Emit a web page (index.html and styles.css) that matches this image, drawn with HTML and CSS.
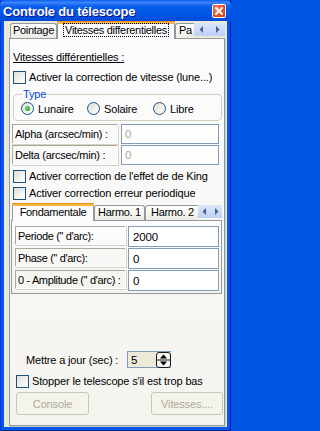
FILE: index.html
```html
<!DOCTYPE html>
<html lang="fr">
<head>
<meta charset="utf-8">
<title>Controle du télescope</title>
<link rel="stylesheet" href="styles.css">
</head>
<body>
<div class="window">
  <div class="titlebar">
    <span class="title">Controle du télescope</span>
    <span class="close"><svg width="8" height="8" viewBox="0 0 8 8"><path d="M1 1L7 7M7 1L1 7" stroke="#fff" stroke-width="1.8" stroke-linecap="square"/></svg></span>
  </div>
  <div class="client">
    <div class="tabctl outer">
      <div class="tabstrip">
        <div class="tabs">
          <div class="tab t-pointage">Pointage</div>
          <div class="tab active t-vitesses"><span class="focus">Vitesses differentielles</span></div>
          <div class="tab t-pa">Pa</div>
        </div>
        <div class="scroller">
          <span class="sbtn"><svg width="5" height="7" viewBox="0 0 5 7"><path d="M4 0L0.5 3.5L4 7Z" fill="#4D6185"/></svg></span>
          <span class="sbtn"><svg width="5" height="7" viewBox="0 0 5 7"><path d="M1 0L4.5 3.5L1 7Z" fill="#4D6185"/></svg></span>
        </div>
      </div>
      <div class="panel main">
        <div class="heading">Vitesses différentielles :</div>
        <label class="check first-check"><span class="box"></span>Activer la correction de vitesse (lune...)</label>
        <fieldset class="group">
          <legend>Type</legend>
          <div class="radios">
            <label class="radio r1"><span class="dot on"></span>Lunaire</label>
            <label class="radio r2"><span class="dot"></span>Solaire</label>
            <label class="radio r3"><span class="dot"></span>Libre</label>
          </div>
        </fieldset>
        <div class="field f-alpha"><span class="lbl">Alpha (arcsec/min) :</span><span class="input disabled">0</span></div>
        <div class="field f-delta"><span class="lbl">Delta (arcsec/min) :</span><span class="input disabled">0</span></div>
        <label class="check row17 king"><span class="box"></span>Activer correction de l'effet de de King</label>
        <label class="check row17"><span class="box"></span>Activer correction erreur periodique</label>

        <div class="tabctl inner">
          <div class="tabstrip">
            <div class="tabs">
              <div class="tab active t-fond">Fondamentale</div>
              <div class="tab t-h1">Harmo. 1</div>
              <div class="tab t-h2">Harmo. 2</div>
            </div>
            <div class="scroller small">
              <span class="sbtn"><svg width="5" height="7" viewBox="0 0 5 7"><path d="M4 0L0.5 3.5L4 7Z" fill="#4D6185"/></svg></span>
              <span class="sbtn"><svg width="5" height="7" viewBox="0 0 5 7"><path d="M1 0L4.5 3.5L1 7Z" fill="#4D6185"/></svg></span>
            </div>
          </div>
          <div class="panel sub">
            <div class="field2"><span class="lbl">Periode ('' d'arc):</span><span class="input">2000</span></div>
            <div class="field2"><span class="lbl">Phase ('' d'arc):</span><span class="input">0</span></div>
            <div class="field2"><span class="lbl">0 - Amplitude ('' d'arc) :</span><span class="input">0</span></div>
          </div>
        </div>

        <div class="spacer"></div>

        <div class="update">
          <span class="update-lbl">Mettre a jour (sec) :</span>
          <span class="spin-input">5</span>
          <span class="spin"><svg width="15" height="16" viewBox="0 0 15 16"><rect x="0.5" y="0.5" width="14" height="15" rx="2.5" fill="#F4F4F0" stroke="#1A1A1A"/><line x1="1" y1="8" x2="14" y2="8" stroke="#1A1A1A"/><path d="M7.5 2.5L11 6.5H4Z" fill="#000"/><path d="M4 9.5H11L7.5 13.5Z" fill="#000"/></svg></span>
        </div>
        <label class="check stop"><span class="box"></span>Stopper le telescope s'il est trop bas</label>
        <div class="buttons">
          <span class="btn b-console">Console</span>
          <span class="btn b-vit">Vitesses....</span>
        </div>
      </div>
    </div>
  </div>
</div>
</body>
</html>
```

FILE: styles.css
```css
* { box-sizing: border-box; }
html, body { margin: 0; padding: 0; }
body {
  width: 231px;
  height: 431px;
  overflow: hidden;
  font-family: "Liberation Sans", Arial, sans-serif;
  font-size: 11px;
  letter-spacing: -0.15px;
  color: #000;
  background: #0054E3;
}
.window {
  width: 231px;
  height: 431px;
  display: flex;
  flex-direction: column;
  background: #0058EE;
  padding: 0 4px 4px 4px;
  box-shadow: inset 1px 0 #0831D9, inset -1px 0 #001EA0, inset 0 -1px #001EA0;
}
.titlebar {
  height: 21px;
  margin: 0 -4px;
  padding: 0 5px 0 3px;
  display: flex;
  align-items: center;
  justify-content: space-between;
  background: linear-gradient(#0A5FEF 0%, #3B84F8 12%, #0A5EEE 30%, #0055E5 70%, #0049D9 100%);
  border-radius: 5px 5px 0 0;
}
.title {
  font-family: "Liberation Sans", Arial, sans-serif;
  font-weight: bold;
  font-size: 13px;
  letter-spacing: -0.2px;
  color: #fff;
  text-shadow: 1px 1px #0F1089;
  padding-top: 1px;
}
.close {
  width: 14px;
  height: 14px;
  border: 1px solid #fff;
  border-radius: 2px;
  background: radial-gradient(circle at 35% 35%, #F08A6C, #E0502A 60%, #C33A17);
  display: flex;
  align-items: center;
  justify-content: center;
  margin-top: 1px;
}
.client {
  flex: 1;
  background: #ECE9D8;
  padding: 0 2px 1px 5px;
  display: flex;
  flex-direction: column;
}
.tabctl { display: flex; flex-direction: column; }
.tabctl.outer { flex: 1; }
.tabstrip {
  height: 17px;
  display: flex;
  align-items: flex-end;
}
.tabs {
  flex: 1;
  display: flex;
  align-items: flex-end;
  overflow: hidden;
  height: 18px;
  margin-bottom: -1px;
  position: relative;
  z-index: 1;
}
.tab {
  flex: none;
  height: 15px;
  margin-bottom: 1px;
  border: 1px solid #919B9C;
  border-bottom: none;
  border-radius: 3px 3px 0 0;
  background: linear-gradient(#FFFFFF, #F3F3EF 60%, #ECEBE6);
  line-height: 13px;
  padding: 0;
  text-align: center;
  letter-spacing: -0.3px;
  white-space: nowrap;
  overflow: hidden;
}
.tab.active {
  height: 18px;
  margin-bottom: 0;
  background: #FCFCFE;
  border-top: 3px solid #F7B83A;
  line-height: 13px;
  overflow: visible;
}
.tab.active::before {
  content: "";
  display: block;
  height: 1px;
  margin: -3px -1px 2px -1px;
  background: #E68B2C;
  border-radius: 3px 3px 0 0;
}
.t-pointage { width: 47px; margin-left: 1px; }
.t-vitesses { width: 118px; }
.focus { outline: 1px dotted #000; outline-offset: 0; padding: 0 1px; }
.t-pa { width: 30px; text-align: left; padding-left: 3px; }
.scroller {
  width: 31px;
  height: 13px;
  margin-bottom: 1px;
  align-self: flex-end;
  display: flex;
  position: relative;
  top: -1px;
}
.sbtn {
  flex: 1;
  display: flex;
  align-items: center;
  justify-content: center;
  background: linear-gradient(#DCE6FB, #BCCFF6);
}
.panel {
  border: 1px solid #919B9C;
  background: linear-gradient(#FCFCFE, #F4F3EE);
}
.panel.main {
  flex: 1;
  display: flex;
  flex-direction: column;
  padding: 0 0 10px 3px;
  box-shadow: 1px 1px 0 #D0CEBF;
}
.heading {
  margin-top: 12px;
  line-height: 13px;
  text-decoration: underline;
}
.check {
  display: flex;
  align-items: center;
  height: 13px;
  line-height: 13px;
  white-space: nowrap;
}
.box {
  flex: none;
  width: 13px;
  height: 13px;
  border: 1px solid #1C5180;
  background: linear-gradient(135deg, #DCDCD7 0%, #F5F5F2 65%, #FFFFFF 100%);
  margin-right: 3px;
}
.first-check { margin-top: 7px; }
.group {
  margin: 4px 2px 0 0;
  padding: 1px 0 5px 7px;
  border: 1px solid #D0D0BF;
  border-radius: 4px;
  min-width: 0;
}
.group legend {
  color: #0046D5;
  padding: 0 1px;
  margin-left: 1px;
  line-height: 13px;
}
.radios { display: flex; height: 13px; }
.radio {
  display: flex;
  align-items: center;
  height: 13px;
  width: 66px;
}
.dot {
  flex: none;
  width: 13px;
  height: 13px;
  border-radius: 50%;
  border: 1px solid #1C5180;
  background: linear-gradient(135deg, #DCDCD7 0%, #F5F5F2 65%, #FFFFFF 100%);
  margin-right: 4px;
  display: flex;
  align-items: center;
  justify-content: center;
}
.dot.on::after {
  content: "";
  width: 5px;
  height: 5px;
  border-radius: 50%;
  background: radial-gradient(circle at 40% 40%, #7BE07B, #21A121 70%);
}
.field {
  display: flex;
  height: 20px;
  margin-left: -1px;
  margin-right: 5px;
}
.f-alpha { margin-top: 3px; }
.f-delta { margin-top: 1px; }
.lbl {
  flex: none;
  border: 1px solid;
  border-color: #ACA899 #FFFFFF #FFFFFF #ACA899;
  box-shadow: 1px 1px 0 #D6D3C6;
  padding: 0 0 0 2px;
  display: flex;
  align-items: center;
  white-space: nowrap;
  overflow: hidden;
  letter-spacing: -0.25px;
}
.field .lbl { width: 106px; height: 20px; }
.input {
  border: 1px solid #7F9DB9;
  background: #FFFFFF;
  display: flex;
  align-items: center;
  padding-left: 3px;
  font-size: 11.5px;
}
.field .input { margin-left: 3px; flex: 1; }
.input.disabled { color: #ACA899; background: #FDFDFB; }
.row17 { height: 17px; }
.king { margin-top: 3px; }
.inner { margin: 1px 2px 0 -2px; }
.t-fond { width: 82px; margin-left: 1px; }
.t-h1 { width: 51px; }
.t-h2 { width: 60px; text-align: left; padding-left: 5px; }
.scroller.small { width: 24px; }
.panel.sub {
  padding: 5px 2px 2px 3px;
  display: flex;
  flex-direction: column;
  gap: 1px;
}
.field2 { display: flex; height: 21px; }
.field2 .lbl { width: 111px; height: 19px; letter-spacing: -0.35px; }
.field2 .input { margin-left: 2px; flex: 1; height: 21px; padding-left: 4px; }
.spacer { flex: 1; }
.update {
  display: flex;
  align-items: center;
  height: 17px;
  padding-left: 13px;
}
.update-lbl { width: 101px; }
.spin-input {
  width: 29px;
  height: 17px;
  border: 1px solid #7F9DB9;
  border-right: none;
  background: #ECE9D8;
  display: flex;
  align-items: center;
  padding-left: 3px;
  font-size: 11.5px;
}
.spin {
  width: 15px;
  height: 17px;
  display: flex;
  align-items: center;
  border-top: 1px solid #7F9DB9;
  border-bottom: 1px solid #7F9DB9;
  background: #ECE9D8;
}
.stop { margin-top: 7px; padding-left: 3px; }
.buttons {
  display: flex;
  justify-content: space-between;
  margin-top: 4px;
  padding-left: 3px;
  margin-right: 1px;
}
.btn {
  height: 23px;
  border: 1px solid #C9C7BA;
  border-radius: 3px;
  background: #F5F4EA;
  color: #ACA899;
  display: flex;
  align-items: center;
  justify-content: center;
}
.b-console { width: 73px; }
.b-vit { width: 72px; }
```
